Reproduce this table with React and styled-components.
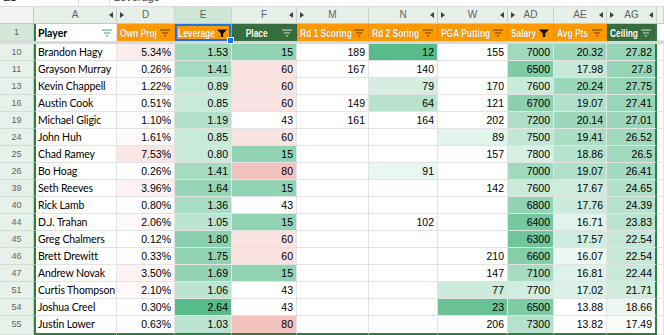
import React from 'react';
import styled, { createGlobalStyle, css } from 'styled-components';

const GlobalStyle = createGlobalStyle`
  html, body { margin: 0; padding: 0; background: #ffffff; overflow: hidden; }
  #root { width: 664px; height: 335px; overflow: hidden; }
`;

const COLS = '34px 83px 58px 57px 65px 72px 69px 70px 46px 53px 50px 7px';
const GRID = '#e2e3e3';
const RANGE = '#2f7d43';
const ORANGE = '#ff9900';
const DKGREEN = '#356d3e';

const GREEN = [87, 187, 138];
const RED = [230, 124, 115];
const mix = (c, t) => {
  const k = Math.max(0, Math.min(1, t));
  return `rgb(${c.map((v) => Math.round(255 - (255 - v) * k)).join(',')})`;
};

const scales = {
  d: (v) => mix(RED, (v / 7.53) * 0.19),
  e: (v) => mix(GREEN, v / 2.64),
  f: (v) => (v <= 43 ? mix(GREEN, (43 - v) / 43) : mix(RED, (v - 43) / 80)),
  m: () => '#ffffff',
  n: (v) => mix(GREEN, (102 - v) / 90),
  w: (v) => mix(GREEN, (104 - v) / 90),
  ad: (v) => mix(GREEN, 0.85 - (v - 6300) * 0.000413),
  ae: (v) => mix(GREEN, (v - 15.2) * 0.1176),
  ag: (v) => mix(GREEN, 0.05 + (v - 17.49) * 0.0561),
};

const KEYS = ['d', 'e', 'f', 'm', 'n', 'w', 'ad', 'ae', 'ag'];

const rows = [
  [10, 'Brandon Hagy', '5.34%', '1.53', '15', '189', '12', '155', '7000', '20.32', '27.82'],
  [11, 'Grayson Murray', '0.26%', '1.41', '60', '167', '140', '', '6500', '17.98', '27.8'],
  [13, 'Kevin Chappell', '1.22%', '0.89', '60', '', '79', '170', '7600', '20.24', '27.75'],
  [16, 'Austin Cook', '0.51%', '0.85', '60', '149', '64', '121', '6700', '19.07', '27.41'],
  [19, 'Michael Gligic', '1.10%', '1.19', '43', '161', '164', '202', '7200', '20.14', '27.01'],
  [24, 'John Huh', '1.61%', '0.85', '60', '', '', '89', '7500', '19.41', '26.52'],
  [25, 'Chad Ramey', '7.53%', '0.80', '15', '', '', '157', '7800', '18.86', '26.5'],
  [26, 'Bo Hoag', '0.26%', '1.41', '80', '', '91', '', '7000', '19.07', '26.41'],
  [39, 'Seth Reeves', '3.96%', '1.64', '15', '', '', '142', '7600', '17.67', '24.65'],
  [40, 'Rick Lamb', '0.80%', '1.36', '43', '', '', '', '6800', '17.76', '24.39'],
  [44, 'D.J. Trahan', '2.06%', '1.05', '15', '', '102', '', '6400', '16.71', '23.83'],
  [45, 'Greg Chalmers', '0.12%', '1.80', '60', '', '', '', '6300', '17.57', '22.54'],
  [46, 'Brett Drewitt', '0.33%', '1.75', '60', '', '', '210', '6600', '16.07', '22.54'],
  [47, 'Andrew Novak', '3.50%', '1.69', '15', '', '', '147', '7100', '16.81', '22.44'],
  [51, 'Curtis Thompson', '2.10%', '1.06', '43', '', '', '77', '7700', '17.02', '21.71'],
  [54, 'Joshua Creel', '0.30%', '2.64', '43', '', '', '23', '6500', '13.88', '18.66'],
  [55, 'Justin Lower', '0.63%', '1.03', '80', '', '', '206', '7300', '13.82', '17.49'],
];

const colHeads = [
  { label: 'A', r: true },
  { label: 'D', l: true },
  { label: 'E', sel: true },
  { label: 'F', r: true },
  { label: 'M', l: true },
  { label: 'N', r: true },
  { label: 'W', l: true, r: true },
  { label: 'AD', l: true },
  { label: 'AE', r: true },
  { label: 'AG', l: true, r: true },
];

const heads = [
  { text: 'Player', bg: '#ffffff', fg: '#000000', icon: 'lines', ic: '#5cb784' },
  { text: 'Own Proj', bg: ORANGE, fg: '#fff', icon: 'lines', ic: '#7a4e00' },
  { text: 'Leverage', bg: ORANGE, fg: '#fff', icon: 'funnel', ic: '#111', sel: true },
  { text: 'Place', bg: DKGREEN, fg: '#fff', icon: 'lines', ic: '#b9cbbd', center: true },
  { text: 'Rd 1 Scoring', bg: ORANGE, fg: '#fff', icon: 'lines', ic: '#7a4e00' },
  { text: 'Rd 2 Soring', bg: ORANGE, fg: '#fff', icon: 'lines', ic: '#7a4e00' },
  { text: 'PGA Putting', bg: ORANGE, fg: '#fff', icon: 'lines', ic: '#7a4e00' },
  { text: 'Salary', bg: ORANGE, fg: '#fff', icon: 'funnel', ic: '#111' },
  { text: 'Avg Pts', bg: ORANGE, fg: '#fff', icon: 'lines', ic: '#7a4e00' },
  { text: 'Ceiling', bg: DKGREEN, fg: '#fff', icon: 'lines', ic: '#b9cbbd' },
];

const Page = styled.div`
  display: flex;
  flex-direction: column;
  width: 664px;
  height: 335px;
  font-family: 'Liberation Sans', Arial, sans-serif;
`;

const FormulaBar = styled.div`
  display: flex;
  align-items: flex-end;
  height: 7px;
  overflow: hidden;
  box-sizing: border-box;
  border-bottom: 1px solid #dadce0;
  font-size: 11px;
  color: #3c4043;
`;

const NameBox = styled.div`
  flex: none;
  width: 78px;
  padding: 0 0 2px 3px;
  box-sizing: border-box;
  line-height: 14px;
  color: #202124;
`;

const FxBox = styled.div`
  flex: none;
  width: 32px;
  height: 20px;
  box-sizing: border-box;
  border-left: 1px solid #dadce0;
  border-right: 1px solid #dadce0;
  text-align: center;
  font-style: italic;
  color: #b0b4b8;
  line-height: 14px;
`;

const FormulaText = styled.div`
  padding: 0 0 2px 4px;
  line-height: 14px;
  color: #3c4043;
`;

const Row = styled.div`
  display: grid;
  grid-template-columns: ${COLS};
  height: ${(p) => (p.$last ? 19 : 17)}px;
`;

const Corner = styled.div`
  background: #f1f3f1;
  border-right: 1px solid #c4c9c5;
  border-bottom: 1px solid #c4c9c5;
  box-sizing: border-box;
`;

const ColHead = styled.div`
  display: grid;
  grid-template-columns: 10px 1fr 10px;
  align-items: center;
  box-sizing: border-box;
  background: ${(p) => (p.$sel ? '#cde6d5' : p.$blank ? '#eef3ef' : '#e6f0e8')};
  border-right: 1px solid #c9d1cb;
  border-bottom: 1px solid #c4c9c5;
  font-size: 10px;
  color: #5f6368;
  text-align: center;
  line-height: 16px;
`;

const ArrowSlot = styled.span`
  display: flex;
  justify-content: center;
  align-items: center;
`;

const RowHead = styled.div`
  box-sizing: border-box;
  background: ${(p) => (p.$sel ? '#d3e8d8' : '#e6f2e9')};
  border-right: 1px solid #c4ccc6;
  border-bottom: 1px solid #d2dcd4;
  font-size: 9px;
  color: #5f6368;
  text-align: center;
  line-height: 16px;
`;

const HeadCell = styled.div`
  position: relative;
  display: flex;
  align-items: center;
  gap: 3px;
  box-sizing: border-box;
  padding: 0 4px 0 3px;
  background: ${(p) => p.$bg};
  color: ${(p) => p.$fg};
  border-right: 1px solid ${(p) => (p.$bg === '#ffffff' ? GRID : 'rgba(0,0,0,0.08)')};
  ${(p) => p.$first && css`border-left: 2px solid ${RANGE}; padding-left: 2px;`}
  ${(p) => p.$endcol && css`border-right: 2px solid ${RANGE};`}
  font-family: 'Liberation Sans', Arial, sans-serif;
  font-weight: bold;
  font-size: 10.5px;
  line-height: 16px;
  white-space: nowrap;
  ${(p) => !p.$first && css`text-shadow: 0 0 1px rgba(60, 35, 0, 0.5);`}
  ${(p) =>
    p.$sel &&
    css`
      box-shadow: inset 0 0 0 2px #1a73e8;
      z-index: 2;
      &::after {
        content: '';
        position: absolute;
        right: -3px;
        bottom: -3px;
        width: 5px;
        height: 5px;
        background: #1a73e8;
        border: 1px solid #ffffff;
      }
    `}
`;

const HeadText = styled.span`
  flex: 1;
  min-width: 0;
  display: flex;
  justify-content: ${(p) => (p.$center ? 'center' : 'flex-start')};
`;

const HeadLabel = styled.span`
  display: inline-block;
  transform: scaleX(${(p) => (p.$player ? 1 : 0.8)});
  transform-origin: ${(p) => (p.$center ? 'center' : 'left')} center;
  font-family: ${(p) => (p.$player ? "'Lato', 'Liberation Sans', sans-serif" : 'inherit')};
  font-size: ${(p) => (p.$player ? '10.5px' : '10.5px')};
`;

const BlankHead = styled.div`
  background: #ffffff;
  border-bottom: 1px solid ${GRID};
`;

const FreezeBar = styled.div`
  height: 3px;
  background: #d7d9db;
  flex: none;
`;

const Cell = styled.div`
  box-sizing: border-box;
  background: ${(p) => p.$bg || '#ffffff'};
  border-right: 1px solid ${GRID};
  border-bottom: 1px solid ${GRID};
  ${(p) => p.$first && css`border-left: 2px solid ${RANGE};`}
  ${(p) => p.$endcol && css`border-right: 2px solid ${RANGE};`}
  ${(p) => p.$last && css`border-bottom: 2px solid ${RANGE};`}
  padding: 0 3px 0 2px;
  text-align: ${(p) => (p.$left ? 'left' : 'right')};
  font-family: ${(p) => (p.$name ? "'Lato', 'Liberation Sans', sans-serif" : "'Liberation Sans', Arial, sans-serif")};
  font-size: ${(p) => (p.$name ? '10.5px' : '10.5px')};
  letter-spacing: ${(p) => (p.$name ? '-0.1px' : '0')};
  color: #000000;
  line-height: 16px;
  white-space: nowrap;
  overflow: hidden;
`;

const Arrow = ({ dir }) => (
  <svg width="4" height="6" viewBox="0 0 4 6">
    <path d={dir === 'left' ? 'M4 0V6L0 3Z' : 'M0 0V6L4 3Z'} fill="#3c4043" />
  </svg>
);

const FilterIcon = ({ kind, color }) => (
  <svg width="10" height="8" viewBox="0 0 10 8" style={{ flex: 'none' }}>
    {kind === 'funnel' ? (
      <path d="M0 0.5H10L6.2 4.4V8H3.8V4.4Z" fill={color} />
    ) : (
      <g fill={color}>
        <rect x="0" y="0.5" width="10" height="1.2" />
        <rect x="2" y="3.4" width="6" height="1.2" />
        <rect x="3.8" y="6.3" width="2.4" height="1.2" />
      </g>
    )}
  </svg>
);

export default function App() {
  return (
    <>
      <GlobalStyle />
      <Page>
        <FormulaBar>
          <NameBox>E1</NameBox>
          <FxBox>fx</FxBox>
          <FormulaText>Leverage</FormulaText>
        </FormulaBar>

        <Row>
          <Corner />
          {colHeads.map((c) => (
            <ColHead key={c.label} $sel={c.sel}>
              <ArrowSlot>{c.l && <Arrow dir="right" />}</ArrowSlot>
              <span>{c.label}</span>
              <ArrowSlot>{c.r && <Arrow dir="left" />}</ArrowSlot>
            </ColHead>
          ))}
          <ColHead $blank />
        </Row>

        <Row>
          <RowHead $sel>1</RowHead>
          {heads.map((h, i) => (
            <HeadCell
              key={h.text}
              $bg={h.bg}
              $fg={h.fg}
              $sel={h.sel}
              $first={i === 0}
              $endcol={i === heads.length - 1}
            >
              <HeadText $center={h.center}>
                <HeadLabel $center={h.center} $player={i === 0}>{h.text}</HeadLabel>
              </HeadText>
              <FilterIcon kind={h.icon} color={h.ic} />
            </HeadCell>
          ))}
          <BlankHead />
        </Row>

        <FreezeBar />

        {rows.map((r, ri) => {
          const last = ri === rows.length - 1;
          const [num, name, ...vals] = r;
          return (
            <Row key={num} $last={last}>
              <RowHead>{num}</RowHead>
              <Cell $first $left $name $last={last}>{name}</Cell>
              {vals.map((v, i) => {
                const key = KEYS[i];
                const n = parseFloat(v);
                const bg = v === '' ? '#ffffff' : scales[key](n);
                return (
                  <Cell key={key} $bg={bg} $last={last} $endcol={i === vals.length - 1}>
                    {v}
                  </Cell>
                );
              })}
              <Cell />
            </Row>
          );
        })}
      </Page>
    </>
  );
}
